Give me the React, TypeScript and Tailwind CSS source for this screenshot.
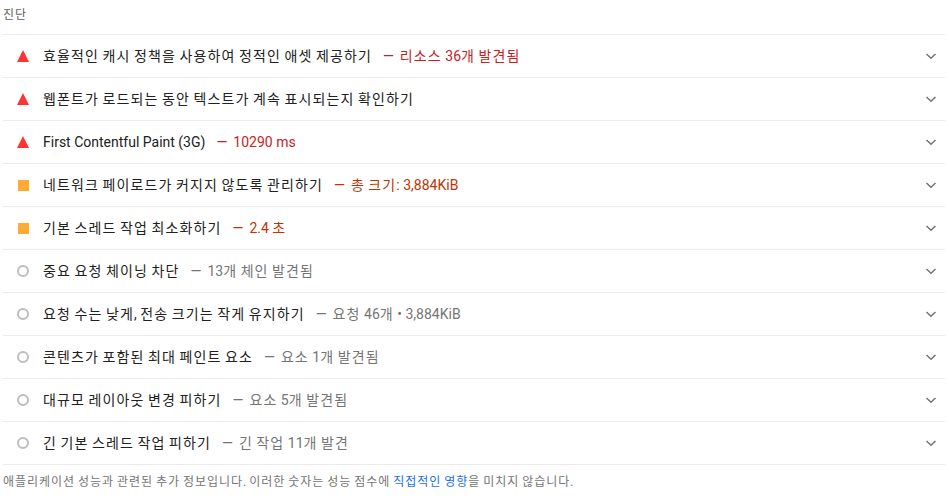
import React from 'react';

type Kind = 'fail' | 'average' | 'info';

type Audit = {
  title: string;
  display: string;
  kind: Kind;
};

const audits: Audit[] = [
  { title: '효율적인 캐시 정책을 사용하여 정적인 애셋 제공하기', display: '리소스 36개 발견됨', kind: 'fail' },
  { title: '웹폰트가 로드되는 동안 텍스트가 계속 표시되는지 확인하기', display: '', kind: 'fail' },
  { title: 'First Contentful Paint (3G)', display: '10290 ms', kind: 'fail' },
  { title: '네트워크 페이로드가 커지지 않도록 관리하기', display: '총 크기: 3,884KiB', kind: 'average' },
  { title: '기본 스레드 작업 최소화하기', display: '2.4 초', kind: 'average' },
  { title: '중요 요청 체이닝 차단', display: '13개 체인 발견됨', kind: 'info' },
  { title: '요청 수는 낮게, 전송 크기는 작게 유지하기', display: '요청 46개 • 3,884KiB', kind: 'info' },
  { title: '콘텐츠가 포함된 최대 페인트 요소', display: '요소 1개 발견됨', kind: 'info' },
  { title: '대규모 레이아웃 변경 피하기', display: '요소 5개 발견됨', kind: 'info' },
  { title: '긴 기본 스레드 작업 피하기', display: '긴 작업 11개 발견', kind: 'info' },
];

// Hangul in the installed CJK font runs a bit narrow, so pad those runs out
const Ko: React.FC<{ text: string }> = ({ text }) => (
  <>
    {text.split(/([\uAC00-\uD7A3]+)/).map((part, i) =>
      /[\uAC00-\uD7A3]/.test(part) ? (
        <span key={i} className="tracking-[0.08em]">
          {part}
        </span>
      ) : (
        <React.Fragment key={i}>{part}</React.Fragment>
      )
    )}
  </>
);

const StatusIcon: React.FC<{ kind: Kind }> = ({ kind }) => {
  if (kind === 'fail') {
    return (
      <svg width="12" height="12" viewBox="0 0 12 12" className="shrink-0">
        <polygon points="6,0 12,12 0,12" fill="#ff3333" />
      </svg>
    );
  }
  if (kind === 'average') {
    return (
      <span className="flex h-[12px] w-[12px] shrink-0 items-center justify-center">
        <span className="block h-[11px] w-[11px] bg-[#ffaa33]" />
      </span>
    );
  }
  return <span className="block h-[12px] w-[12px] shrink-0 rounded-full border-2 border-[#bdbdbd]" />;
};

const displayColor: Record<Kind, string> = {
  fail: 'text-[#c7221f]',
  average: 'text-[#c33300]',
  info: 'text-[#757575]',
};

const Chevron: React.FC = () => (
  <svg width="12" height="12" viewBox="0 0 12 12" className="shrink-0">
    <path d="M1.5 4 L6 8.3 L10.5 4" fill="none" stroke="#757575" strokeWidth="1.5" />
  </svg>
);

const App: React.FC = () => {
  return (
    <div
      className="min-h-screen bg-white pl-[3px] pr-[4px]"
      style={{ fontFamily: 'Roboto, "Noto Sans CJK KR", sans-serif' }}
    >
      {/* Section header */}
      <div className="h-[35px] border-b border-[#ebebeb] pt-[7px] text-[12px] leading-[16px] text-[#616161]">
        <Ko text="진단" />
      </div>

      {/* Audit rows */}
      {audits.map((a) => (
        <div
          key={a.title}
          className="flex h-[43px] items-center border-b border-[#ebebeb] pl-[14px] pr-[8px]"
        >
          <StatusIcon kind={a.kind} />
          <div className="ml-[14px] flex flex-1 items-center text-[14px] leading-[20px]">
            <span className="text-[#212121]">
              <Ko text={a.title} />
            </span>
            {a.display && (
              <span className={`ml-[11px] ${displayColor[a.kind]}`}>
                <span className="mr-[6px]">—</span>
                <Ko text={a.display} />
              </span>
            )}
          </div>
          <Chevron />
        </div>
      ))}

      {/* Footer note */}
      <p className="pt-[9px] text-[12px] leading-[16px] text-[#757575]">
        <Ko text="애플리케이션 성능과 관련된 추가 정보입니다. 이러한 숫자는 성능 점수에 " />
        <span className="text-[#1a73e8]">
          <Ko text="직접적인 영향" />
        </span>
        <Ko text="을 미치지 않습니다." />
      </p>
    </div>
  );
};

export default App;
